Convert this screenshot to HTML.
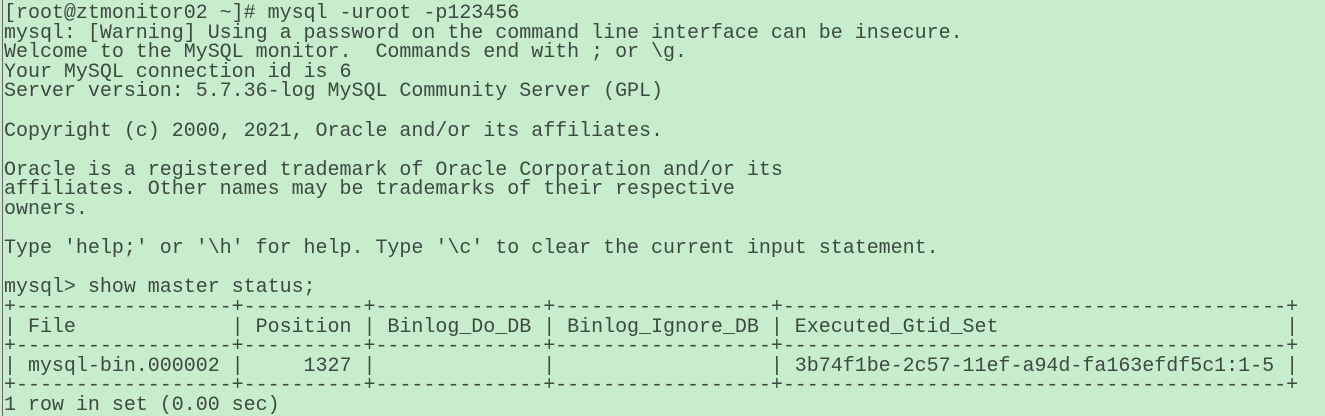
<!DOCTYPE html>
<html><head><meta charset="utf-8"><style>
html,body{margin:0;padding:0;background:#c7edcc;width:1325px;height:416px;overflow:hidden}
pre{margin:0;padding:4px 0 0 4px;font-family:"Liberation Mono","DejaVu Sans Mono",monospace;font-size:20px;line-height:19.6px;color:#3d4a42;letter-spacing:-0.02px}
.cur{position:absolute;left:2px;top:0;width:1px;height:416px;background:#666}
</style></head><body><div class="cur"></div><pre>[root@ztmonitor02 ~]# mysql -uroot -p123456
mysql: [Warning] Using a password on the command line interface can be insecure.
Welcome to the MySQL monitor.  Commands end with ; or \g.
Your MySQL connection id is 6
Server version: 5.7.36-log MySQL Community Server (GPL)

Copyright (c) 2000, 2021, Oracle and/or its affiliates.

Oracle is a registered trademark of Oracle Corporation and/or its
affiliates. Other names may be trademarks of their respective
owners.

Type 'help;' or '\h' for help. Type '\c' to clear the current input statement.

mysql&gt; show master status;
+------------------+----------+--------------+------------------+------------------------------------------+
| File             | Position | Binlog_Do_DB | Binlog_Ignore_DB | Executed_Gtid_Set                        |
+------------------+----------+--------------+------------------+------------------------------------------+
| mysql-bin.000002 |     1327 |              |                  | 3b74f1be-2c57-11ef-a94d-fa163efdf5c1:1-5 |
+------------------+----------+--------------+------------------+------------------------------------------+
1 row in set (0.00 sec)</pre></body></html>
